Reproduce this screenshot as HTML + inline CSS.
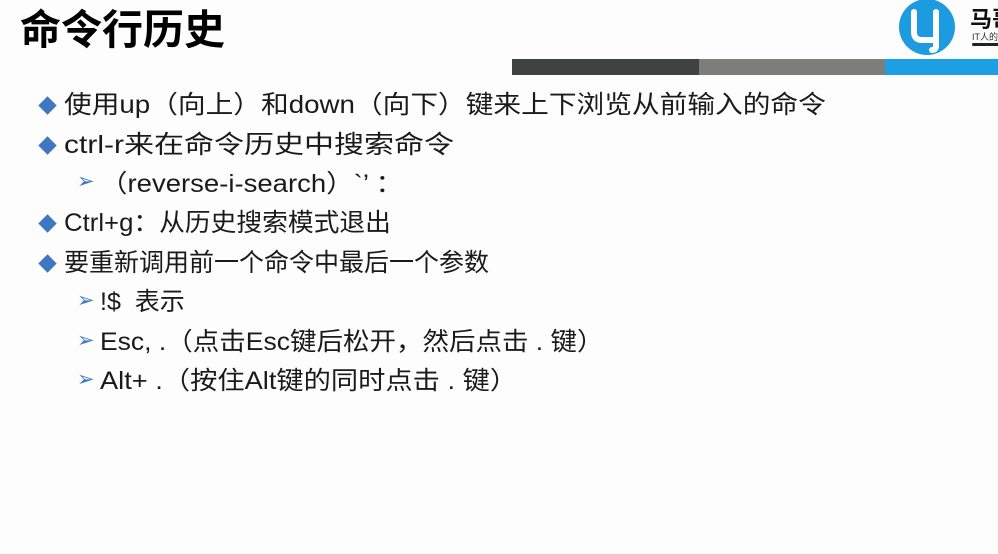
<!DOCTYPE html>
<html><head><meta charset="utf-8"><style>
body{margin:0;width:998px;height:554px;background:#fdfdfd;overflow:hidden;position:relative;font-family:"Liberation Sans","Noto Sans CJK SC",sans-serif;color:#1a1a1a}
.t{position:absolute;left:20px;top:2px;font-size:41px;font-weight:bold;color:#000;line-height:56px}
.bar{position:absolute;top:59px;height:16px}
.l{position:absolute;font-size:25px;line-height:30px;white-space:nowrap;transform-origin:0 50%}
.d{position:absolute;width:13px;height:13px;background:#3f78c0;transform:rotate(45deg)}
.a{position:absolute;font-size:21px;color:#3f78c0}
</style></head><body>
<div class="t">命令行历史</div>
<div class="bar" style="left:512px;width:187px;background:#404241"></div>
<div class="bar" style="left:699px;width:186px;background:#7d7d7b"></div>
<div class="bar" style="left:885px;width:113px;background:#1d9fe3"></div>
<svg style="position:absolute;left:898px;top:0" width="60" height="56" viewBox="0 0 60 56"><circle cx="29" cy="27" r="28" fill="#1d9be0"/><path d="M16 12 V32 Q16 40 24 40 H38 V46 Q38 50 34 50" fill="none" stroke="#fff" stroke-width="6" stroke-linecap="round"/><path d="M38 12 V40" stroke="#fff" stroke-width="6" stroke-linecap="round"/></svg>
<div style="position:absolute;left:970px;top:2px;font-size:22px;font-weight:bold;color:#111;white-space:nowrap">马哥</div>
<div style="position:absolute;left:972px;top:30px;font-size:9px;color:#333;white-space:nowrap">IT人的</div>
<div style="position:absolute;left:972px;top:43px;width:30px;height:3px;background:#222;border-radius:2px"></div>

<div class="d" style="left:41px;top:99px"></div><div class="l" style="left:64px;top:90px;transform:scaleX(1.108)">使用up（向上）和down（向下）键来上下浏览从前输入的命令</div>
<div class="d" style="left:41px;top:139px"></div><div class="l" style="left:64px;top:130px;transform:scaleX(1.2)">ctrl-r来在命令历史中搜索命令</div>
<div class="a" style="left:77px;top:169px">➢</div><div class="l" style="left:100px;top:169px;transform:scaleX(1.1)">（reverse-i-search）`’ ：</div>
<div class="d" style="left:41px;top:217px"></div><div class="l" style="left:64px;top:208px;transform:scaleX(1.03)">Ctrl+g：从历史搜索模式退出</div>
<div class="d" style="left:41px;top:257px"></div><div class="l" style="left:64px;top:248px">要重新调用前一个命令中最后一个参数</div>
<div class="a" style="left:77px;top:288px">➢</div><div class="l" style="left:100px;top:287px">!$&nbsp; 表示</div>
<div class="a" style="left:77px;top:328px">➢</div><div class="l" style="left:100px;top:327px;transform:scaleX(1.06)">Esc, .（点击Esc键后松开，然后点击 . 键）</div>
<div class="a" style="left:77px;top:367px">➢</div><div class="l" style="left:100px;top:366px;transform:scaleX(1.09)">Alt+ .（按住Alt键的同时点击 . 键）</div>
</body></html>
